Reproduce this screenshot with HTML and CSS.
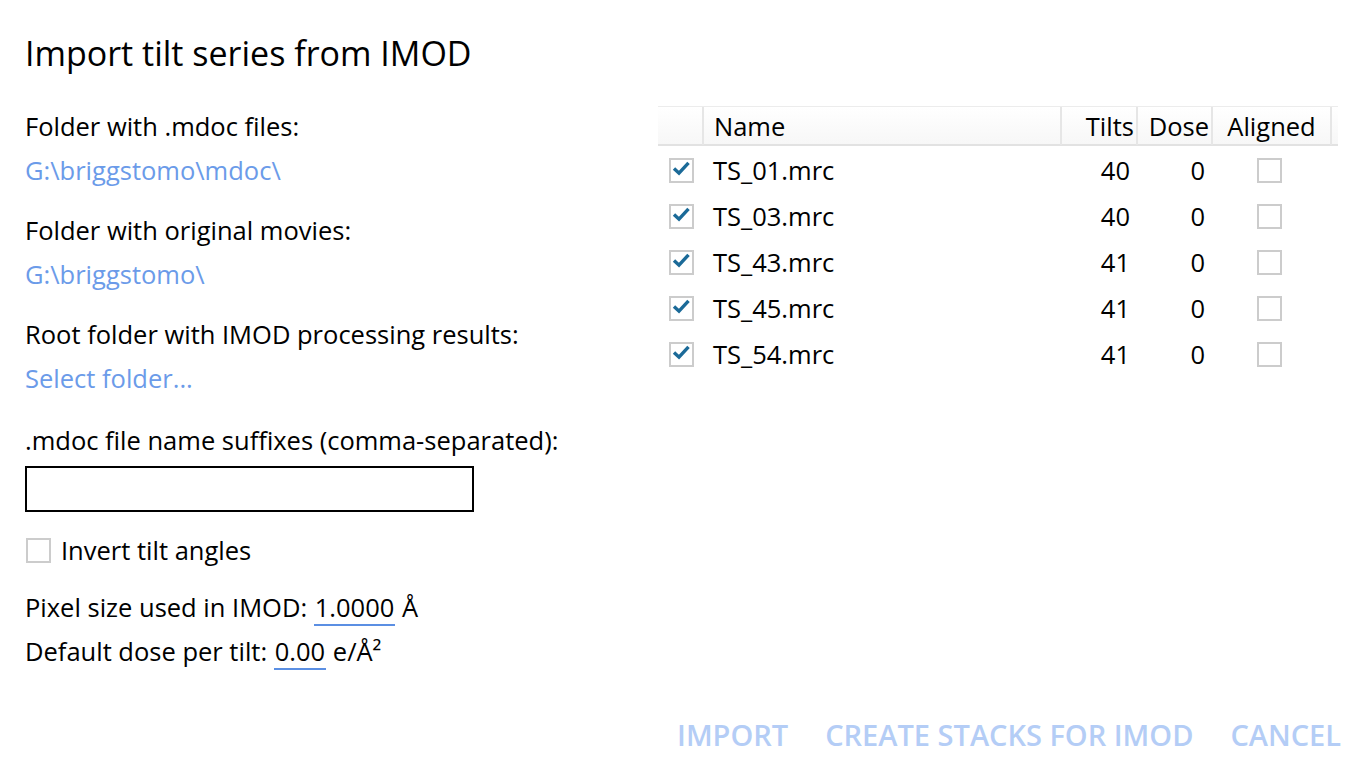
FILE: index.html
```html
<!DOCTYPE html>
<html>
<head>
<meta charset="utf-8">
<link rel="stylesheet" href="styles.css">
</head>
<body>
<div class="dialog">
  <h1 class="title">Import tilt series from IMOD</h1>
  <div class="content">
    <div class="left">
      <div class="label">Folder with .mdoc files:</div>
      <div class="link">G:\briggstomo\mdoc\</div>
      <div class="label gap">Folder with original movies:</div>
      <div class="link">G:\briggstomo\</div>
      <div class="label gap">Root folder with IMOD processing results:</div>
      <div class="link">Select folder...</div>
      <div class="label gap2">.mdoc file name suffixes (comma-separated):</div>
      <div class="textbox"></div>
      <div class="check-row">
        <span class="cb"></span>
        <span class="check-label">Invert tilt angles</span>
      </div>
      <div class="value-row first">Pixel size used in IMOD: <span class="val">1.0000</span> Å</div>
      <div class="value-row">Default dose per tilt: <span class="val">0.00</span> e/Å²</div>
    </div>
    <div class="right">
      <div class="thead">
        <div class="th"></div>
        <div class="th th-name">Name</div>
        <div class="th th-num">Tilts</div>
        <div class="th th-num">Dose</div>
        <div class="th th-center">Aligned</div>
        <div class="th th-end"></div>
      </div>
      <div class="row">
        <div class="cell cell-cb"><span class="cb on"><svg viewBox="0 0 21 21"><path d="M3 8.5 L8 13.2 L17.5 2.8"/></svg></span></div>
        <div class="cell cell-name">TS_01.mrc</div>
        <div class="cell cell-num">40</div>
        <div class="cell cell-num">0</div>
        <div class="cell cell-center"><span class="cb"></span></div>
      </div>
      <div class="row">
        <div class="cell cell-cb"><span class="cb on"><svg viewBox="0 0 21 21"><path d="M3 8.5 L8 13.2 L17.5 2.8"/></svg></span></div>
        <div class="cell cell-name">TS_03.mrc</div>
        <div class="cell cell-num">40</div>
        <div class="cell cell-num">0</div>
        <div class="cell cell-center"><span class="cb"></span></div>
      </div>
      <div class="row">
        <div class="cell cell-cb"><span class="cb on"><svg viewBox="0 0 21 21"><path d="M3 8.5 L8 13.2 L17.5 2.8"/></svg></span></div>
        <div class="cell cell-name">TS_43.mrc</div>
        <div class="cell cell-num">41</div>
        <div class="cell cell-num">0</div>
        <div class="cell cell-center"><span class="cb"></span></div>
      </div>
      <div class="row">
        <div class="cell cell-cb"><span class="cb on"><svg viewBox="0 0 21 21"><path d="M3 8.5 L8 13.2 L17.5 2.8"/></svg></span></div>
        <div class="cell cell-name">TS_45.mrc</div>
        <div class="cell cell-num">41</div>
        <div class="cell cell-num">0</div>
        <div class="cell cell-center"><span class="cb"></span></div>
      </div>
      <div class="row">
        <div class="cell cell-cb"><span class="cb on"><svg viewBox="0 0 21 21"><path d="M3 8.5 L8 13.2 L17.5 2.8"/></svg></span></div>
        <div class="cell cell-name">TS_54.mrc</div>
        <div class="cell cell-num">41</div>
        <div class="cell cell-num">0</div>
        <div class="cell cell-center"><span class="cb"></span></div>
      </div>
    </div>
  </div>
  <div class="actions">
    <span class="btn">IMPORT</span>
    <span class="btn">CREATE STACKS FOR IMOD</span>
    <span class="btn">CANCEL</span>
  </div>
</div>
</body>
</html>
```

FILE: styles.css
```css
html, body {
  margin: 0;
  padding: 0;
  background: #fff;
}
body {
  font-family: "Open Sans", "Noto Sans", sans-serif;
  color: #000;
  font-size: 25.5px;
}
.dialog {
  height: 771px;
  width: 1361px;
  display: flex;
  flex-direction: column;
  box-sizing: border-box;
}
.title {
  margin: 33px 0 0 25px;
  font-size: 34px;
  font-weight: normal;
  line-height: 40px;
  height: 40px;
}
.content {
  display: flex;
  margin-top: 31px;
}
.left {
  width: 632px;
  padding-left: 25px;
  box-sizing: border-box;
}
.label, .link {
  line-height: 44px;
  height: 44px;
  white-space: nowrap;
}
.link {
  color: #6b9be9;
}
.gap { margin-top: 16px; }
.gap2 { margin-top: 18px; }
.textbox {
  margin-top: 4px;
  width: 449px;
  height: 46px;
  border: 2px solid #000;
  box-sizing: border-box;
}
.check-row {
  margin-top: 16px;
  display: flex;
  align-items: center;
  height: 44px;
}
.check-label {
  margin-left: 10px;
}
.cb {
  display: inline-block;
  width: 25px;
  height: 25px;
  border: 2px solid #cccccc;
  box-sizing: border-box;
  background: #fff;
  position: relative;
}
.check-row .cb { margin-left: 1px; }
.cb svg {
  width: 21px;
  height: 21px;
  display: block;
}
.cb svg path {
  fill: none;
  stroke: #1b6a98;
  stroke-width: 3.4;
  stroke-linecap: butt;
  stroke-linejoin: miter;
}
.value-row {
  line-height: 44px;
  height: 44px;
  white-space: nowrap;
}
.value-row.first {
  margin-top: 13px;
}
.val {
  display: inline-block;
  line-height: 33px;
  border-bottom: 2px solid #5b8fe3;
  padding: 0 1px;
}
.right {
  padding-top: 2px;
  padding-left: 26px;
}
.thead {
  display: grid;
  grid-template-columns: 46px 358px 76px 75px 119px 6px;
  height: 40px;
  box-sizing: border-box;
  border-top: 1px solid #ececec;
  border-bottom: 2px solid #e2e2e2;
  background: linear-gradient(#ffffff, #f7f7f7);
}
.th {
  line-height: 38px;
  border-right: 2px solid #e6e6e6;
  white-space: nowrap;
  box-sizing: border-box;
}
.th-end { border-right: none; }
.th-name { padding-left: 10px; }
.th-num { text-align: right; padding-right: 2px; }
.th-center { text-align: center; }
.row {
  display: grid;
  grid-template-columns: 46px 358px 76px 75px 119px;
  height: 46px;
  align-items: center;
}
.thead + .row { margin-top: 1px; }
.cell { white-space: nowrap; line-height: 44px; }
.cell-cb { padding-left: 11px; display: flex; align-items: center; }
.cell-name { padding-left: 9px; }
.cell-num { text-align: right; padding-right: 8px; }
.cell-center { display: flex; justify-content: center; align-items: center; padding-right: 6px; }
.actions {
  margin-top: auto;
  display: flex;
  justify-content: flex-end;
  gap: 37px;
  padding-right: 20px;
  padding-bottom: 16px;
  line-height: 40px;
}
.btn {
  color: #b4cdf6;
  font-size: 29px;
  font-weight: 600;
}
```
